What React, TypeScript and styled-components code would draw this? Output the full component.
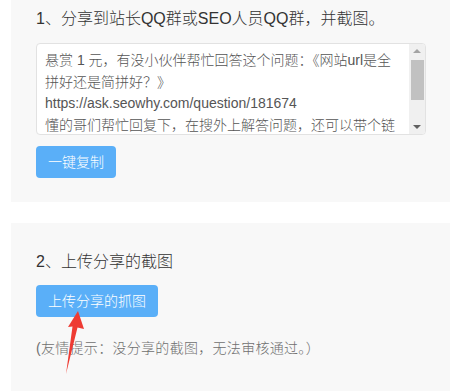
import React from "react";
import styled, { createGlobalStyle } from "styled-components";

const GlobalStyle = createGlobalStyle`
  html, body {
    margin: 0;
    padding: 0;
    background: #ffffff;
  }
  body {
    font-family: "Liberation Sans", "Noto Sans CJK SC", Arial, sans-serif;
    color: #333;
  }
`;

const Page = styled.div`
  position: relative;
  width: 462px;
  height: 391px;
  overflow: hidden;
  display: flex;
  flex-direction: column;
  gap: 21px;
`;

const Card = styled.section<{ $top: number; $bottom: number }>`
  margin: 0 12px 0 11px;
  padding: ${(p) => p.$top}px 24px ${(p) => p.$bottom}px 25px;
  background: #f8f8f8;
  display: flex;
  flex-direction: column;
  align-items: flex-start;
  flex-shrink: 0;
`;

const Heading = styled.h3`
  margin: 0;
  font-size: 16px;
  line-height: 22px;
  font-weight: 300;
  color: #333;
`;

const TextBox = styled.div`
  margin-top: 13px;
  align-self: stretch;
  height: 90px;
  display: flex;
  background: #fff;
  border: 1px solid #e2e2e2;
  border-radius: 4px;
  overflow: hidden;
`;

const TextBody = styled.div`
  flex: 1;
  padding: 6px 8px 0;
  overflow: hidden;
  font-size: 14px;
  font-weight: 300;
  line-height: 21.5px;
  color: #555;
  white-space: nowrap;
`;

const Line = styled.div`
  height: 21.5px;
`;

const Scrollbar = styled.div`
  width: 16px;
  background: #f0f0f0;
  display: flex;
  flex-direction: column;
  align-items: center;
`;

const ScrollArrow = styled.div<{ $down?: boolean }>`
  height: 14px;
  width: 100%;
  display: flex;
  align-items: center;
  justify-content: center;
  &::after {
    content: "";
    width: 0;
    height: 0;
    border-left: 4px solid transparent;
    border-right: 4px solid transparent;
    ${(p) =>
      p.$down
        ? "border-top: 4px solid #606060;"
        : "border-bottom: 4px solid #a3a3a3;"}
  }
`;

const Thumb = styled.div`
  margin-top: 2px;
  width: 13px;
  height: 40px;
  background: #c1c1c1;
`;

const Track = styled.div`
  flex: 1;
`;

const Button = styled.button<{ $gap: number }>`
  margin-top: ${(p) => p.$gap}px;
  height: 32px;
  padding: 0 12px;
  border: none;
  border-radius: 4px;
  background: #5aaff8;
  color: #fff;
  font-family: inherit;
  font-size: 14px;
  font-weight: 300;
  line-height: 32px;
  cursor: pointer;
`;

const Hint = styled.p`
  margin: 21px 0 0;
  font-size: 14px;
  font-weight: 300;
  line-height: 20px;
  color: #6f6f6f;
  letter-spacing: 0.3px;
`;

const Arrow = styled.svg`
  position: absolute;
  left: 0;
  top: 0;
  pointer-events: none;
`;

const lines = [
  "悬赏 1 元，有没小伙伴帮忙回答这个问题：《网站url是全",
  "拼好还是简拼好？》",
  "https://ask.seowhy.com/question/181674",
  "懂的哥们帮忙回复下，在搜外上解答问题，还可以带个链",
  "接。",
];

export default function App() {
  return (
    <>
      <GlobalStyle />
      <Page>
        <Card $top={8} $bottom={24}>
          <Heading>1、分享到站长QQ群或SEO人员QQ群，并截图。</Heading>
          <TextBox>
            <TextBody>
              {lines.map((l) => (
                <Line key={l}>{l}</Line>
              ))}
            </TextBody>
            <Scrollbar>
              <ScrollArrow />
              <Thumb />
              <Track />
              <ScrollArrow $down />
            </Scrollbar>
          </TextBox>
          <Button $gap={11}>一键复制</Button>
        </Card>
        <Card $top={28} $bottom={40}>
          <Heading>2、上传分享的截图</Heading>
          <Button $gap={12}>上传分享的抓图</Button>
          <Hint>(友情提示：没分享的截图，无法审核通过。）</Hint>
        </Card>
        <Arrow width="462" height="391" viewBox="0 0 462 391">
          <polygon
            points="78,311 84,329 77.5,327.5 66,374 72.5,326.5 68,327"
            fill="#ee3b33"
          />
        </Arrow>
      </Page>
    </>
  );
}
